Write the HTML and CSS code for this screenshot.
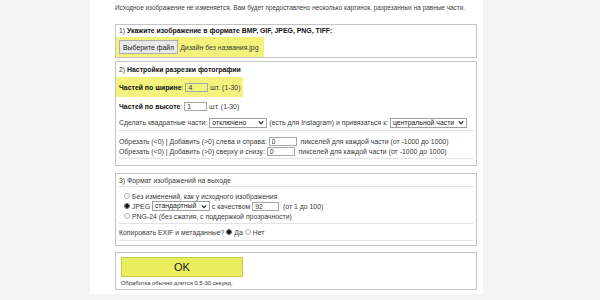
FILE: index.html
```html
<!DOCTYPE html>
<html>

<head>
  <title>Разрезать фото на части</title>
  <link rel="stylesheet" href="styles.css">
</head>

<body>
  <div class="page">
    <p class="intro">Исходное изображение не изменяется. Вам будет предоставлено несколько картинок, разрезанных на равные части.</p>

    <div class="box box-file">
      <div class="head">1) <b>Укажите изображение в формате BMP, GIF, JPEG, PNG, TIFF:</b></div>
      <div class="hl hl-file">
        <button class="file-btn">Выберите файл</button>
        <span class="file-name">Дизайн без названия.jpg</span>
      </div>
    </div>

    <div class="box box-cut">
      <div class="head">2) <b>Настройки разрезки фотографии</b></div>
      <div class="row">
        <div class="hl">
          <b>Частей по ширине</b>:&nbsp;<input type="text" class="num hl-input" value="4">&nbsp;шт. (1-30)
        </div>
      </div>
      <div class="row row-h">
        <b>Частей по высоте</b>:&nbsp;<input type="text" class="num" value="1">&nbsp;шт. (1-30)
      </div>
      <div class="row row-sq sep">
        Сделать квадратные части:&nbsp;
        <span class="sel sel-off"><select><option>отключено</option></select><svg viewBox="0 0 8 6" width="6" height="5"><path d="M1 1.5 L4 4.5 L7 1.5" fill="none" stroke="#222" stroke-width="1.6"/></svg></span>
        &nbsp;(есть для Instagram) и привязаться к:&nbsp;
        <span class="sel sel-center"><select><option>центральной части к</option></select><svg viewBox="0 0 8 6" width="6" height="5"><path d="M1 1.5 L4 4.5 L7 1.5" fill="none" stroke="#222" stroke-width="1.6"/></svg></span>
      </div>
      <div class="group sep">
        <div class="row">Обрезать (&lt;0) | Добавить (&gt;0) слева и справа:&nbsp;<input type="text" class="px" value="0">&nbsp;&nbsp;пикселей для каждой части (от -1000 до 1000)</div>
        <div class="row">Обрезать (&lt;0) | Добавить (&gt;0) сверху и снизу:&nbsp;<input type="text" class="px" value="0">&nbsp;&nbsp;пикселей для каждой части (от -1000 до 1000)</div>
      </div>
    </div>

    <div class="box box-format">
      <div class="head sep">3) Формат изображений на выходе</div>
      <div class="group sep">
        <label class="row"><input type="radio" name="fmt">Без изменений, как у исходного изображения</label>
        <label class="row"><input type="radio" name="fmt" checked>JPEG&nbsp;<span class="sel sel-jpeg"><select><option>стандартный</option></select><svg viewBox="0 0 8 6" width="6" height="5"><path d="M1 1.5 L4 4.5 L7 1.5" fill="none" stroke="#222" stroke-width="1.6"/></svg></span>&nbsp;с качеством&nbsp;<input type="text" class="q" value="92">&nbsp;&nbsp;(от 1 до 100)</label>
        <label class="row"><input type="radio" name="fmt">PNG-24 (без сжатия, с поддержкой прозрачности)</label>
      </div>
      <div class="row exif sep">
        Копировать EXIF и метаданные?&nbsp;
        <label><input type="radio" name="exif" checked>Да</label>&nbsp;
        <label><input type="radio" name="exif">Нет</label>
      </div>
    </div>

    <div class="box box-ok">
      <button class="ok">OK</button>
      <div class="note">Обработка обычно длится 0.5-30 секунд.</div>
    </div>
  </div>
</body>

</html>
```

FILE: styles.css
```css
* {
  box-sizing: border-box;
  margin: 0;
  padding: 0;
}

body {
  background: #f4f4f4;
  font-family: 'Liberation Sans', Arial, sans-serif;
  font-size: 6.9px;
  color: #3a3a3a;
}

.page {
  width: 393px;
  margin-left: 90px;
  background: #fff;
  padding: 3px 6px 4px 25px;
}

.intro {
  font-size: 6.4px;
  line-height: 9px;
  margin-bottom: 12px;
  white-space: nowrap;
}

b {
  color: #111;
}

.box {
  border: 1px solid #c4c4c4;
  padding: 0 3px;
}

.head {
  line-height: 9px;
  padding: 3px 0 3px;
  white-space: nowrap;
}

.sep {
  border-bottom: 1px solid #e2e2e2;
}

.hl {
  display: inline-flex;
  align-items: center;
  background: #f2f27c;
  margin-left: -3px;
  padding: 0 3px;
  height: 20px;
  white-space: nowrap;
}

.row {
  display: flex;
  align-items: center;
  white-space: nowrap;
}

.row-h {
  height: 18px;
}

.row-sq {
  height: 16px;
}

/* file chooser */
.box-file .head {
  padding: 1px 0 2px;
}

.box-file .hl {
  width: 148px;
}

.file-btn {
  font: inherit;
  color: #222;
  background: #e9e9e9;
  border: 1px solid #adadad;
  padding: 0 3px;
  height: 14px;
  margin-right: 2px;
  white-space: nowrap;
}

/* inputs */
input[type="text"] {
  font: inherit;
  color: #333;
  border: 1px solid #a8a8a8;
  height: 9px;
  padding: 0 2px;
  background: #fff;
}

.num {
  width: 23px;
}

.hl-input {
  background: #f2f27c !important;
}

.px {
  width: 28px;
}

.q {
  width: 27px;
}

.sel {
  display: inline-flex;
  align-items: center;
  border: 1px solid #a0a0a0;
  height: 10px;
  padding-right: 2px;
  background: #fff;
}

.sel select {
  appearance: none;
  -webkit-appearance: none;
  border: none;
  background: transparent;
  font: inherit;
  color: #222;
  padding: 0 2px;
  height: 8px;
  line-height: 8px;
}

.sel-off select {
  width: 48px;
}

.sel-center select {
  width: 67px;
}

.sel-jpeg select {
  width: 48px;
}

.group {
  padding: 5px 0 2px;
}

.group .row {
  height: 10px;
}

.box-cut {
  margin-top: 3px;
  padding-bottom: 6px;
}

/* format */
.box-format {
  margin-top: 7px;
  padding-bottom: 4px;
}

.box-format .head {
  padding: 2px 0 1px;
}

.box-format .group {
  padding: 4px 0 2px;
}

.box-format .group .row {
  padding-left: 5px;
}

input[type="radio"] {
  appearance: none;
  -webkit-appearance: none;
  width: 6px;
  height: 6px;
  border: 1px solid #b5b5b5;
  border-radius: 50%;
  margin: 0 2px 0 0;
  background: #fff;
}

input[type="radio"]:checked {
  border-color: #555;
  background: radial-gradient(circle, #111 0 1.6px, #fff 2px);
}

.exif {
  height: 17px;
}

.exif label {
  display: inline-flex;
  align-items: center;
}

/* submit */
.box-ok {
  margin-top: 6px;
  padding: 4px 5px 0;
}

.ok {
  display: block;
  width: 122px;
  height: 20px;
  background: #e9ec5c;
  border: 1px solid #c9cb4a;
  font-family: 'Liberation Sans', Arial, sans-serif;
  font-size: 11px;
  color: #222;
}

.note {
  font-size: 5.85px;
  line-height: 12px;
  color: #333;
}
```
